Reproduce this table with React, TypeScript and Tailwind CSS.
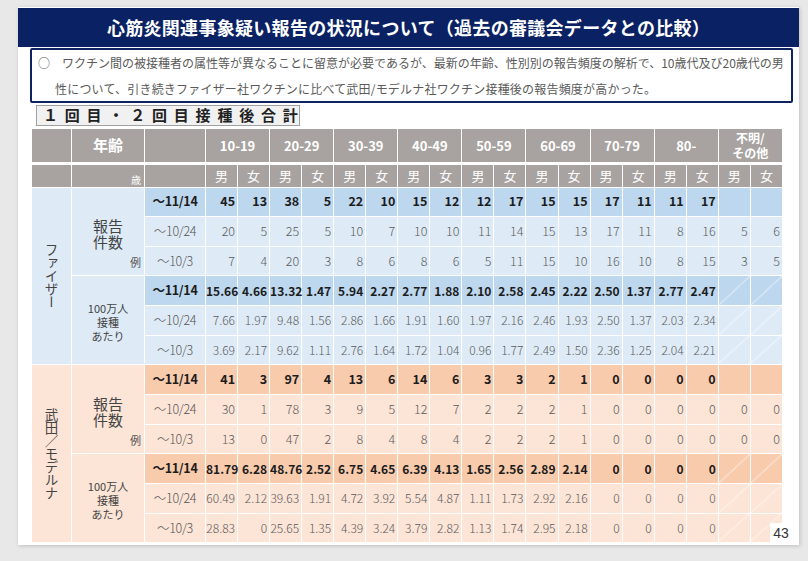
import React from "react";

const ages = ["10-19", "20-29", "30-39", "40-49", "50-59", "60-69", "70-79", "80-"];
const dates = ["～11/14", "～10/24", "～10/3"];

const pfRep = [
  ["45", "13", "38", "5", "22", "10", "15", "12", "12", "17", "15", "15", "17", "11", "11", "17", "", ""],
  ["20", "5", "25", "5", "10", "7", "10", "10", "11", "14", "15", "13", "17", "11", "8", "16", "5", "6"],
  ["7", "4", "20", "3", "8", "6", "8", "6", "5", "11", "15", "10", "16", "10", "8", "15", "3", "5"],
];
const pfRate = [
  ["15.66", "4.66", "13.32", "1.47", "5.94", "2.27", "2.77", "1.88", "2.10", "2.58", "2.45", "2.22", "2.50", "1.37", "2.77", "2.47"],
  ["7.66", "1.97", "9.48", "1.56", "2.86", "1.66", "1.91", "1.60", "1.97", "2.16", "2.46", "1.93", "2.50", "1.37", "2.03", "2.34"],
  ["3.69", "2.17", "9.62", "1.11", "2.76", "1.64", "1.72", "1.04", "0.96", "1.77", "2.49", "1.50", "2.36", "1.25", "2.04", "2.21"],
];
const mdRep = [
  ["41", "3", "97", "4", "13", "6", "14", "6", "3", "3", "2", "1", "0", "0", "0", "0", "", ""],
  ["30", "1", "78", "3", "9", "5", "12", "7", "2", "2", "2", "1", "0", "0", "0", "0", "0", "0"],
  ["13", "0", "47", "2", "8", "4", "8", "4", "2", "2", "2", "1", "0", "0", "0", "0", "0", "0"],
];
const mdRate = [
  ["81.79", "6.28", "48.76", "2.52", "6.75", "4.65", "6.39", "4.13", "1.65", "2.56", "2.89", "2.14", "0", "0", "0", "0"],
  ["60.49", "2.12", "39.63", "1.91", "4.72", "3.92", "5.54", "4.87", "1.11", "1.73", "2.92", "2.16", "0", "0", "0", "0"],
  ["28.83", "0", "25.65", "1.35", "4.39", "3.24", "3.79", "2.82", "1.13", "1.74", "2.95", "2.18", "0", "0", "0", "0"],
];

type Theme = { light: string; dark: string; brand: string };

const pfTheme: Theme = { light: "bg-[#deebf7]", dark: "bg-[#bdd7ee]", brand: "ファイザー" };
const mdTheme: Theme = { light: "bg-[#fce4d6]", dark: "bg-[#f8cbad]", brand: "武田／モデルナ" };

const cellB = "border border-white";
const diag =
  "bg-[linear-gradient(to_bottom_right,transparent_48.5%,rgba(255,255,255,0.9)_50%,transparent_51.5%)]";

function Brand({ theme }: { theme: Theme }) {
  return (
    <div className="flex justify-center">
      <span className="[writing-mode:vertical-rl] text-[13.5px] leading-[16px] tracking-[-0.5px] text-[#444] whitespace-nowrap">
        {theme.brand}
      </span>
    </div>
  );
}

function Section({ theme, rep, rate }: { theme: Theme; rep: string[][]; rate: string[][] }) {
  const rows: React.ReactNode[] = [];
  [0, 1].forEach((b) => {
    const data = b === 0 ? rep : rate;
    data.forEach((row, i) => {
      const bold = i === 0;
      const bg = bold ? theme.dark : theme.light;
      const numCls = bold ? "font-bold text-[#1c1c1c]" : "font-light text-[#5b5b5b]";
      rows.push(
        <tr key={`${b}-${i}`}>
          {b === 0 && i === 0 && (
            <td rowSpan={6} className={`${cellB} ${theme.light} align-middle p-0`}>
              <Brand theme={theme} />
            </td>
          )}
          {i === 0 &&
            (b === 0 ? (
              <td rowSpan={3} className={`${cellB} ${theme.light} align-bottom p-0 pb-[6px]`}>
                <div className="text-center text-[15px] leading-[16px] text-[#444]">
                  報告
                  <br />
                  件数
                </div>
                <div className="mt-[6px] text-right pr-[3px] text-[11px] leading-[13px] text-[#555]">例</div>
              </td>
            ) : (
              <td rowSpan={3} className={`${cellB} ${theme.light} align-middle p-0 pt-[4px]`}>
                <div className="text-center text-[11px] leading-[14px] text-[#444]">
                  100万人
                  <br />
                  接種
                  <br />
                  あたり
                </div>
              </td>
            ))}
          <td
            className={`${cellB} ${bg} p-0 text-[12.5px] tracking-[-0.3px] whitespace-nowrap ${
              bold ? "font-bold text-[#1c1c1c]" : "font-light text-[#555]"
            }`}
          >
            <div className="h-[28.67px] flex items-center justify-center">{dates[i]}</div>
          </td>
          {row.slice(0, 16).map((v, j) => (
            <td
              key={j}
              className={`${cellB} ${bg} p-0 pr-[2px] text-right whitespace-nowrap ${
                b === 0 ? "text-[12.5px]" : "text-[12px]"
              } ${numCls}`}
            >
              {v}
            </td>
          ))}
          {b === 0
            ? [16, 17].map((j) => (
                <td key={j} className={`${cellB} ${bg} p-0 pr-[2px] text-right text-[12.5px] ${numCls}`}>
                  {row[j]}
                </td>
              ))
            : [16, 17].map((j) => <td key={j} className={`${cellB} ${bg} ${diag} p-0`} />)}
        </tr>
      );
    });
  });
  return <>{rows}</>;
}

export default function App() {
  const hdr = "bg-[#a8a3a1] border border-white";
  return (
    <div className="w-[808px] h-[561px] bg-[#e8e8e8] pt-[7px] pl-[18px] font-['Noto_Sans_CJK_JP',sans-serif]">
      <div className="relative w-[781px] h-[538px] bg-white shadow-[1px_1px_4px_rgba(0,0,0,0.18)] pt-[1px]">
        <div className="h-[39px] bg-[#0a2163] flex items-center justify-center text-white font-bold text-[18px] tracking-[0.3px] whitespace-nowrap">
          心筋炎関連事象疑い報告の状況について（過去の審議会データとの比較）
        </div>

        <div className="ml-[12px] mt-[1px] w-[763px] h-[55px] border-2 border-[#0d2260] rounded-[2px] pl-[6px] text-[12px] leading-[26px] text-[#5a5a5a] whitespace-nowrap">
          <div>○　ワクチン間の被接種者の属性等が異なることに留意が必要であるが、最新の年齢、性別別の報告頻度の解析で、10歳代及び20歳代の男</div>
          <div className="pl-[17px] tracking-[0.2px]">性について、引き続きファイザー社ワクチンに比べて武田/モデルナ社ワクチン接種後の報告頻度が高かった。</div>
        </div>

        <div className="ml-[18px] mt-[2px] w-[264px] h-[21px] bg-[#f1f1f1] border border-[#a0a0a0] pl-[6px] flex items-center text-[15px] font-bold tracking-[6.8px] text-[#222] whitespace-nowrap">
          １回目・２回目接種後合計
        </div>

        <div className="ml-[13px] mt-[2px]">
          <table className="table-fixed border-collapse w-[752px]">
            <colgroup>
              <col className="w-[40px]" />
              <col className="w-[73px]" />
              <col className="w-[61px]" />
              {Array.from({ length: 18 }).map((_, i) => (
                <col key={i} />
              ))}
            </colgroup>
            <tbody>
              <tr>
                <td className={`${hdr} border-b-[3px] p-0`}>
                  <div className="h-[32.5px]" />
                </td>
                <td className={`${hdr} border-b-[3px] text-center text-white font-bold text-[15px]`}>年齢</td>
                <td className={`${hdr} border-b-[3px]`} />
                {ages.map((a) => (
                  <td key={a} colSpan={2} className={`${hdr} border-b-[3px] text-center text-white font-bold text-[13px] p-0`}>
                    {a}
                  </td>
                ))}
                <td colSpan={2} className={`${hdr} border-b-[3px] text-center text-white font-bold text-[12px] leading-[15px] p-0`}>
                  不明/
                  <br />
                  その他
                </td>
              </tr>
              <tr>
                <td className={`${hdr} p-0`}>
                  <div className="h-[22px]" />
                </td>
                <td className={`${hdr} align-bottom text-right pr-[3px] pb-[1px] text-white text-[10px] leading-[12px]`}>歳</td>
                <td className={hdr} />
                {Array.from({ length: 18 }).map((_, i) => (
                  <td key={i} className={`${hdr} text-center text-white text-[13px] leading-[16px] p-0`}>
                    {i % 2 === 0 ? "男" : "女"}
                  </td>
                ))}
              </tr>
              <Section theme={pfTheme} rep={pfRep} rate={pfRate} />
              <Section theme={mdTheme} rep={mdRep} rate={mdRate} />
            </tbody>
          </table>
        </div>

        <div className="absolute left-[752px] top-[516px] w-[22px] h-[21px] bg-white flex items-center justify-center text-[14px] text-[#333] font-['Liberation_Sans',sans-serif]">
          43
        </div>
      </div>
    </div>
  );
}
